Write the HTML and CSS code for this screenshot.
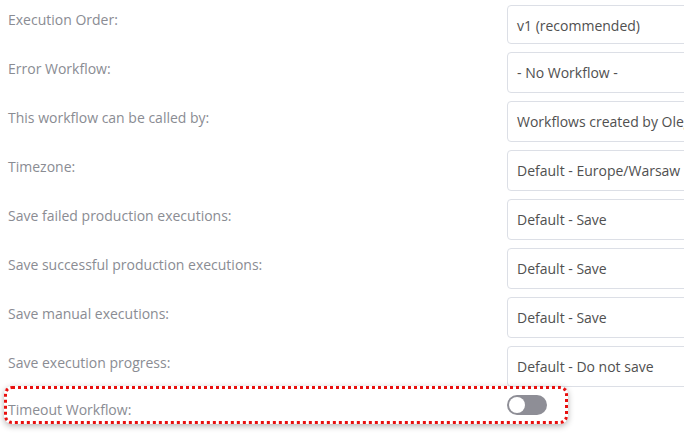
FILE: index.html
```html
<!DOCTYPE html>
<html lang="en">
<head>
  <meta charset="UTF-8">
  <title>Workflow Settings</title>
  <link rel="stylesheet" href="styles.css">
</head>
<body>
  <div class="settings">
    <div class="setting-row">
      <div class="setting-label">Execution Order:</div>
      <div class="select-box">v1 (recommended)</div>
    </div>
    <div class="setting-row">
      <div class="setting-label">Error Workflow:</div>
      <div class="select-box">- No Workflow -</div>
    </div>
    <div class="setting-row">
      <div class="setting-label">This workflow can be called by:</div>
      <div class="select-box">Workflows created by Oleg</div>
    </div>
    <div class="setting-row">
      <div class="setting-label">Timezone:</div>
      <div class="select-box">Default - Europe/Warsaw</div>
    </div>
    <div class="setting-row">
      <div class="setting-label">Save failed production executions:</div>
      <div class="select-box">Default - Save</div>
    </div>
    <div class="setting-row">
      <div class="setting-label">Save successful production executions:</div>
      <div class="select-box">Default - Save</div>
    </div>
    <div class="setting-row">
      <div class="setting-label">Save manual executions:</div>
      <div class="select-box">Default - Save</div>
    </div>
    <div class="setting-row">
      <div class="setting-label">Save execution progress:</div>
      <div class="select-box">Default - Do not save</div>
    </div>
    <div class="setting-row highlight-row">
      <div class="setting-label">Timeout Workflow:</div>
      <div class="toggle"><span class="toggle-knob"></span></div>
      <div class="highlight"></div>
    </div>
  </div>
</body>
</html>
```

FILE: styles.css
```css
body {
  margin: 0;
  padding: 3px 0 0 8px;
  background: #fff;
  font-family: "Open Sans", sans-serif;
  font-size: 14px;
  overflow: hidden;
}

.settings {
  display: flex;
  flex-direction: column;
}

.setting-row {
  display: grid;
  grid-template-columns: 499px 1fr;
  height: 49px;
}

.setting-label {
  color: #8a8c93;
  font-size: 14px;
  line-height: 20px;
  padding-top: 7px;
  white-space: nowrap;
}

.select-box {
  box-sizing: border-box;
  width: 220px;
  height: 41px;
  border: 1px solid #dcdfe6;
  border-radius: 4px;
  padding: 0 9px;
  line-height: 39px;
  color: #505050;
  white-space: nowrap;
  overflow: hidden;
}

.setting-row:first-child .select-box {
  margin-top: 2px;
  height: 39px;
  line-height: 39px;
}

.highlight-row {
  position: relative;
}

.highlight-row .setting-label {
  padding-top: 5px;
}

.toggle {
  box-sizing: border-box;
  width: 40px;
  height: 20px;
  border-radius: 10px;
  background: #8e8e96;
  padding: 2px;
}

.toggle-knob {
  display: block;
  width: 16px;
  height: 16px;
  border-radius: 50%;
  background: #fff;
}

.highlight {
  position: absolute;
  left: -4px;
  top: -9px;
  width: 564px;
  height: 38px;
  box-sizing: border-box;
  border: 3px dotted #e8100f;
  border-radius: 8px;
  box-shadow: 0 2px 6px rgba(0, 0, 0, 0.3);
}
```
